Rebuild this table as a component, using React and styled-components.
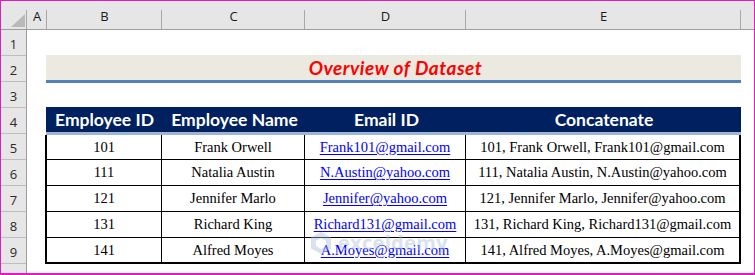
import React from "react";
import styled, { createGlobalStyle } from "styled-components";

const GlobalStyle = createGlobalStyle`
  html, body { margin: 0; padding: 0; background: #ffffff; }
  * { box-sizing: border-box; }
`;

const Frame = styled.div`
  width: 755px;
  height: 275px;
  border: 1px solid #e41bc4;
  border-bottom-width: 2px;
  display: flex;
  flex-direction: column;
  overflow: hidden;
  background: #ffffff;
`;

const ColumnBar = styled.div`
  display: flex;
  height: 29px;
  flex: none;
  background: #e6e6e6;
  border-bottom: 1px solid #9e9e9e;
`;

const ColHead = styled.div`
  position: relative;
  width: ${(p) => p.$w}px;
  flex: ${(p) => (p.$grow ? "1" : "none")};
  display: flex;
  align-items: flex-end;
  justify-content: center;
  padding-bottom: 4px;
  font-family: "Open Sans", "Liberation Sans", sans-serif;
  font-size: 13px;
  color: #1a1a1a;
  &::after {
    content: "";
    position: absolute;
    right: 0;
    top: 9px;
    bottom: 0;
    width: 1px;
    background: ${(p) => (p.$noline ? "transparent" : "#a8a8a8")};
  }
`;

const Corner = styled(ColHead)`
  svg { position: absolute; right: 2px; bottom: 2px; }
`;

const Body = styled.div`
  display: flex;
  flex: 1;
  min-height: 0;
`;

const RowHeads = styled.div`
  width: 26px;
  flex: none;
  background: #e6e6e6;
  border-right: 1px solid #9e9e9e;
  display: flex;
  flex-direction: column;
`;

const RowNum = styled.div`
  height: 26px;
  flex: none;
  border-bottom: 1px solid #bdbdbd;
  display: flex;
  align-items: flex-end;
  justify-content: center;
  padding-bottom: 2px;
  font-family: "Open Sans", "Liberation Sans", sans-serif;
  font-size: 13px;
  color: #2a2a2a;
`;

const Sheet = styled.div`
  flex: 1;
  padding-left: 18px;
  display: flex;
  flex-direction: column;
`;

const TitleBar = styled.div`
  margin-top: 25px;
  margin-left: 1px;
  width: 695px;
  height: 28px;
  background: #eceae0;
  border-bottom: 3px solid #4f81bd;
  display: flex;
  align-items: center;
  justify-content: center;
  padding-left: 4px;
  font-family: Lato, "Open Sans", sans-serif;
  font-weight: 700;
  font-style: italic;
  font-size: 19px;
  letter-spacing: 0.5px;
  color: #ff0000;
`;

const TableWrap = styled.div`
  position: relative;
  margin-top: 24px;
  width: 696px;
`;

const HeadRow = styled.div`
  display: grid;
  grid-template-columns: 117px 143px 161px 1fr;
  height: 28px;
  background: #002060;
  border-bottom: 3px solid #9db5d9;
  margin-left: 1px;
`;

const HeadCell = styled.div`
  display: flex;
  align-items: center;
  justify-content: center;
  font-family: Lato, "Open Sans", sans-serif;
  font-weight: 700;
  font-size: 17.5px;
  color: #ffffff;
  padding-bottom: 1px;
`;

const DataBody = styled.div`
  border: 2px solid #000000;
  border-top: none;
`;

const DataRow = styled.div`
  display: grid;
  grid-template-columns: 115px 143px 161px 1fr;
  height: 26px;
  border-bottom: 1px solid #000000;
  &:first-child { height: 25px; }
  &:last-child { height: 24px; border-bottom: none; }
`;

const Cell = styled.div`
  display: flex;
  align-items: center;
  justify-content: center;
  border-right: ${(p) => (p.$last ? "none" : "1px solid #000000")};
  font-family: "Liberation Serif", "Times New Roman", serif;
  font-size: 14.5px;
  color: #000000;
  white-space: nowrap;
`;

const Link = styled.span`
  color: #0000ff;
  text-decoration: underline;
  text-underline-offset: 2px;
`;

const Watermark = styled.div`
  position: absolute;
  left: 265px;
  top: 122px;
  display: flex;
  align-items: center;
  gap: 6px;
  opacity: 0.42;
  pointer-events: none;
  font-family: "Open Sans", "Liberation Sans", sans-serif;
  font-weight: 700;
  font-size: 20px;
  letter-spacing: 0.3px;
  color: #a9bbd8;
`;

const columns = [
  { key: "A", w: 20 },
  { key: "B", w: 115 },
  { key: "C", w: 143 },
  { key: "D", w: 161 },
  { key: "E", w: 275 },
];

const data = [
  { id: "101", name: "Frank Orwell", email: "Frank101@gmail.com" },
  { id: "111", name: "Natalia Austin", email: "N.Austin@yahoo.com" },
  { id: "121", name: "Jennifer Marlo", email: "Jennifer@yahoo.com" },
  { id: "131", name: "Richard King", email: "Richard131@gmail.com" },
  { id: "141", name: "Alfred Moyes", email: "A.Moyes@gmail.com" },
];

export default function App() {
  return (
    <>
      <GlobalStyle />
      <Frame>
        <ColumnBar>
          <Corner $w={26}>
            <svg width="14" height="13" viewBox="0 0 14 13">
              <polygon points="14,0 14,13 0,13" fill="#b9b9b9" />
            </svg>
          </Corner>
          {columns.map((c) => (
            <ColHead key={c.key} $w={c.w}>
              {c.key}
            </ColHead>
          ))}
          <ColHead $grow $noline />
        </ColumnBar>
        <Body>
          <RowHeads>
            {[1, 2, 3, 4, 5, 6, 7, 8, 9].map((n) => (
              <RowNum key={n}>{n}</RowNum>
            ))}
            <RowNum />
          </RowHeads>
          <Sheet>
            <TitleBar>Overview of Dataset</TitleBar>
            <TableWrap>
              <HeadRow>
                <HeadCell>Employee ID</HeadCell>
                <HeadCell>Employee Name</HeadCell>
                <HeadCell>Email ID</HeadCell>
                <HeadCell>Concatenate</HeadCell>
              </HeadRow>
              <DataBody>
                {data.map((r) => (
                  <DataRow key={r.id}>
                    <Cell>{r.id}</Cell>
                    <Cell>{r.name}</Cell>
                    <Cell>
                      <Link>{r.email}</Link>
                    </Cell>
                    <Cell $last>{`${r.id}, ${r.name}, ${r.email}`}</Cell>
                  </DataRow>
                ))}
              </DataBody>
              <Watermark>
                <svg width="22" height="24" viewBox="0 0 22 24">
                  <polygon points="11,1 21,6.5 21,17.5 11,23 1,17.5 1,6.5" fill="#a9bbd8" />
                  <polygon points="11,7 16,10 16,15 11,18 6,15 6,10" fill="#ffffff" />
                </svg>
                <span>exceldemy</span>
              </Watermark>
            </TableWrap>
          </Sheet>
        </Body>
      </Frame>
    </>
  );
}
